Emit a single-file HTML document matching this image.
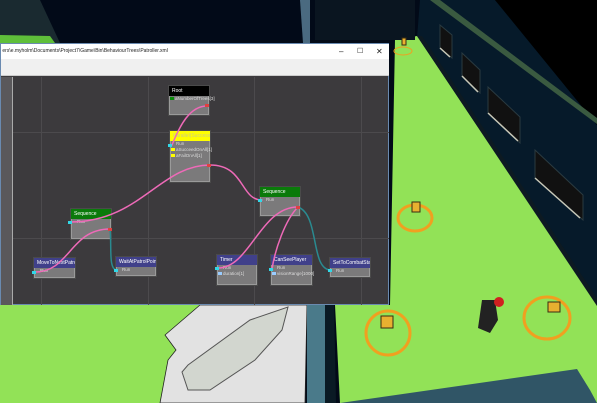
<!DOCTYPE html>
<html><head><style>
*{margin:0;padding:0;box-sizing:border-box}
body{width:597px;height:403px;overflow:hidden;position:relative;background:#020a18;font-family:"Liberation Sans",sans-serif}
.a{position:absolute}
.n{position:absolute;background:#7b7a7b;border:1px solid #4a4a4a;box-shadow:0 0 0 1px #9a9a9a inset}
.h{height:10px;font-size:5px;color:#fff;padding:1px 3px;line-height:8px;white-space:nowrap;overflow:hidden}
.r{font-size:4.5px;color:#dcdcdc;padding-left:6px;height:6px;line-height:6px;white-space:nowrap;position:relative}
.sq{position:absolute;left:1px;top:1px;width:4px;height:3px}
</style></head><body>
<svg class="a" style="left:0;top:0" width="597" height="403">
<polygon points="420,0 495,0 597,125 597,310 417,38" fill="#061a2a"/>
<polygon points="495,0 597,0 597,125" fill="#000"/>
<polygon points="430,0 440,0 597,118 597,124" fill="#3a5a40"/>
<g fill="#111" stroke="#2a3a40" stroke-width="1">
<polygon points="440,25 452,35 452,58 440,48"/>
<polygon points="462,53 480,70 480,93 462,76"/>
<polygon points="488,87 520,117 520,143 488,113"/>
<polygon points="535,150 583,195 583,220 535,178"/></g>
<g stroke="#c8c8b8" stroke-width="1.5"><line x1="440" y1="48" x2="450" y2="57"/><line x1="462" y1="76" x2="478" y2="92"/><line x1="488" y1="113" x2="518" y2="141"/><line x1="535" y1="178" x2="580" y2="218"/></g>
<polygon points="395,40 417,36 597,305 597,403 340,403 335,305 390,305" fill="#92e257"/>
<polygon points="417,36 422,36 597,298 597,306" fill="#0d1a22"/>
<polygon points="340,403 577,369 590,390 597,403" fill="#305566"/>
<polygon points="0,300 210,300 160,403 0,403" fill="#92e257"/>
<polygon points="200,305 307,305 305,403 160,403 168,360 176,350 165,335" fill="#e2e2e2" stroke="#222" stroke-width="0.8"/>
<path d="M188,390 L182,372 L188,365 L250,320 L288,307 L282,330 L255,360 L210,390 Z" fill="#d2d6cf" stroke="#555" stroke-width="1"/>
<polygon points="307,300 325,300 325,403 307,403" fill="#4a7a8a"/>
<polygon points="325,300 334,300 336,403 325,403" fill="#0a1a24"/>
<polygon points="0,0 40,0 60,43 0,43" fill="#1a2a30"/>
<polygon points="0,35 50,36 55,43 0,43" fill="#5fbf3a"/>
<polygon points="300,0 310,0 310,43 303,43" fill="#4a6a80"/>
<polygon points="315,0 415,0 415,40 315,40" fill="#0a1520"/>
<g fill="none" stroke="#f0a020" stroke-width="3">
<ellipse cx="388" cy="333" rx="22" ry="22"/><ellipse cx="547" cy="318" rx="23" ry="21"/><ellipse cx="415" cy="218" rx="17" ry="13"/></g>
<ellipse cx="403" cy="51" rx="9" ry="4" fill="none" stroke="#f0a020" stroke-width="1"/>
<g fill="#e8b030" stroke="#3a2a10" stroke-width="1"><rect x="381" y="316" width="12" height="12"/><rect x="548" y="302" width="12" height="10"/><rect x="412" y="202" width="8" height="10"/><rect x="402" y="38" width="4" height="7"/></g>
<g fill="#222"><polygon points="482,300 495,300 498,320 490,333 478,328"/></g><circle cx="499" cy="302" r="5" fill="#d02020"/>
</svg>
<div class="a" style="left:0;top:43px;width:389px;height:262px;background:#3c3a3d;border:1px solid #6a8ab0">
<div class="a" style="left:0;top:0;width:388px;height:15px;background:#fff;font-size:5px;color:#222;line-height:15px">&nbsp;ers\e.myholm\Documents\Project7\Game\Bin\BehaviourTrees\Patroller.xml
<span class="a" style="left:338px;top:0;font-size:8px">–</span><span class="a" style="left:356px;top:0;font-size:7px">☐</span><span class="a" style="left:375px;top:0;font-size:8px">✕</span></div>
<div class="a" style="left:0;top:15px;width:388px;height:17px;background:#f0f0f0;border-bottom:1px solid #ccc"></div>
<div class="a" style="left:0;top:33px;width:12px;height:228px;background:#5a585b;border-right:1px solid #aaa"></div>
<div class="a" style="left:40px;top:33px;width:1px;height:228px;background:#4c4a4d"></div>
<div class="a" style="left:147px;top:33px;width:1px;height:228px;background:#4c4a4d"></div>
<div class="a" style="left:253px;top:33px;width:1px;height:228px;background:#4c4a4d"></div>
<div class="a" style="left:360px;top:33px;width:1px;height:228px;background:#4c4a4d"></div>
<div class="a" style="left:12px;top:88px;width:376px;height:1px;background:#4c4a4d"></div>
<div class="a" style="left:12px;top:194px;width:376px;height:1px;background:#4c4a4d"></div>
</div>
<div class="n" style="left:168px;top:85px;width:42px;height:31px"><div class="h" style="background:#000">Root</div><div class="r"><span class="sq" style="background:#0a8a0a"></span>aNumberOfTrees[3]</div></div>
<div class="n" style="left:169px;top:130px;width:42px;height:53px"><div class="h" style="background:#ffff00;color:#cc8;">Parallel(SuccessIfA)</div><div class="r">Run</div><div class="r"><span class="sq" style="background:#ff0"></span>aSucceedOnAll[1]</div><div class="r"><span class="sq" style="background:#ff0"></span>aFailOnAll[1]</div></div>
<div class="n" style="left:259px;top:186px;width:42px;height:31px"><div class="h" style="background:#0a7a0a">Sequence</div><div class="r">Run</div></div>
<div class="n" style="left:70px;top:208px;width:42px;height:32px"><div class="h" style="background:#0a7a0a">Sequence</div><div class="r">Run</div></div>
<div class="n" style="left:33px;top:257px;width:43px;height:22px"><div class="h" style="background:#40408a">MoveToNextPatrolPoint</div><div class="r">Run</div></div>
<div class="n" style="left:115px;top:256px;width:42px;height:21px"><div class="h" style="background:#40408a">WaitAtPatrolPoint</div><div class="r">Run</div></div>
<div class="n" style="left:216px;top:254px;width:42px;height:32px"><div class="h" style="background:#40408a">Timer</div><div class="r">Run</div><div class="r"><span class="sq" style="background:#9cf"></span>duration[1]</div></div>
<div class="n" style="left:270px;top:254px;width:43px;height:32px"><div class="h" style="background:#40408a">CanSeePlayer</div><div class="r">Run</div><div class="r"><span class="sq" style="background:#9cf"></span>visionRange[1000]</div></div>
<div class="n" style="left:329px;top:257px;width:42px;height:21px"><div class="h" style="background:#40408a">SetToCombatState</div><div class="r">Run</div></div>
<svg class="a" style="left:0;top:0" width="597" height="403">
<g fill="none" stroke-width="1.5" stroke-linecap="round">
<path d="M207,106 C190,106 180,125 172,145" stroke="#ee6ab8"/>
<path d="M70,222 C140,222 160,165 210,165 C245,165 240,200 262,200" stroke="#ee6ab8"/>
<path d="M110,229 C70,229 70,272 35,272" stroke="#ee6ab8"/>
<path d="M110,229 C112,245 108,270 117,270" stroke="#2a8a90"/>
<path d="M298,207 C260,207 250,268 218,268" stroke="#ee6ab8"/>
<path d="M298,207 C285,220 275,250 272,269" stroke="#ee6ab8"/>
<path d="M298,207 C320,215 310,270 331,270" stroke="#2a8a90"/>
</g>
<g fill="#31d8e8"><rect x="168" y="144" width="4" height="3"/><rect x="68" y="221" width="4" height="3"/><rect x="258" y="199" width="4" height="3"/><rect x="32" y="271" width="4" height="3"/><rect x="114" y="269" width="4" height="3"/><rect x="215" y="267" width="4" height="3"/><rect x="269" y="268" width="4" height="3"/><rect x="328" y="269" width="4" height="3"/></g>
<g fill="#e04040"><rect x="205" y="104" width="4" height="3"/><rect x="207" y="164" width="4" height="3"/><rect x="108" y="228" width="4" height="3"/><rect x="296" y="206" width="4" height="3"/></g>
</svg>
</body></html>
